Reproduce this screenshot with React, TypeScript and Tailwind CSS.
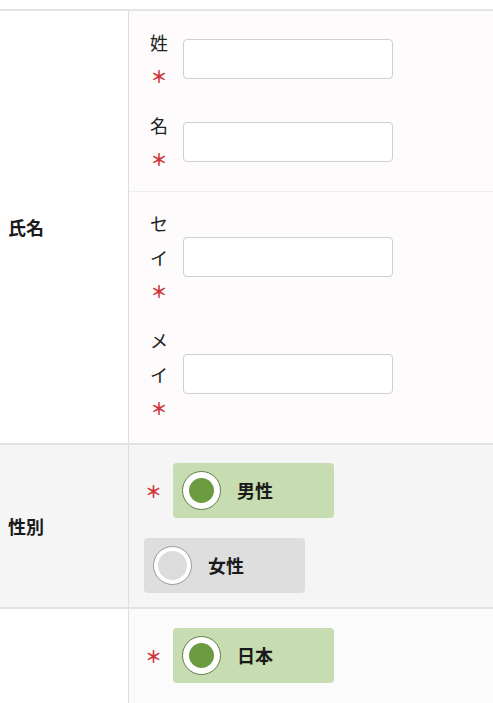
import React from 'react';

const font = { fontFamily: '"Noto Sans CJK JP", "Noto Sans", sans-serif' };

const Req: React.FC = () => (
  <span className="block text-center text-[17px] font-bold text-[#d0343a]">＊</span>
);

interface TextFieldProps {
  label: string[];
}

const TextField: React.FC<TextFieldProps> = ({ label }) => (
  <div className="flex items-center">
    <div className="w-[30px] text-[18px] leading-[34px] text-[#222]">
      {label.map((c, i) => (
        <span key={i} className="block text-center">
          {c}
        </span>
      ))}
      <Req />
    </div>
    <input
      type="text"
      className="ml-[9px] h-[40px] w-[210px] rounded-[4px] border border-[#cfcfcf] bg-white outline-none"
    />
  </div>
);

interface RadioProps {
  label: string;
  checked?: boolean;
}

const Radio: React.FC<RadioProps> = ({ label, checked }) => (
  <div
    className={`flex h-[55px] w-[161px] items-center rounded-[4px] pl-[9px] ${
      checked ? 'bg-[#c7ddb1]' : 'bg-[#dedede]'
    }`}
  >
    <span
      className={`flex h-[39px] w-[39px] items-center justify-center rounded-full border-[1.5px] bg-white ${
        checked ? 'border-[#5f7f45]' : 'border-[#9a9a9a]'
      }`}
    >
      {checked ? (
        <span className="h-[25px] w-[25px] rounded-full bg-[#6c9b42]" />
      ) : (
        <span className="h-[29px] w-[29px] rounded-full bg-[#dcdcdc]" />
      )}
    </span>
    <span className="ml-[16px] text-[18px] font-bold text-[#1a1a1a]">{label}</span>
  </div>
);

const ReqMark: React.FC = () => (
  <span className="w-[29px] pl-[1px] text-[17px] font-bold text-[#d0343a]">＊</span>
);

export default function App() {
  return (
    <div className="w-[493px] bg-white pt-[9px]" style={font}>
      {/* 氏名 */}
      <div className="flex border-t-2 border-[#e4e4e4]">
        <div className="flex w-[128px] items-center pl-[8px] text-[18px] font-bold text-[#1a1a1a]">
          氏名
        </div>
        <div className="flex-1 border-l border-[#dedede] bg-[#fdfbfb]">
          <div className="flex flex-col gap-[15px] border-b border-[#eeeeee] pb-[15px] pl-[15px] pt-[14px]">
            <TextField label={['姓']} />
            <TextField label={['名']} />
          </div>
          <div className="flex flex-col gap-[15px] pb-[18px] pl-[15px] pt-[14px]">
            <TextField label={['セ', 'イ']} />
            <TextField label={['メ', 'イ']} />
          </div>
        </div>
      </div>

      {/* 性別 */}
      <div className="flex border-t-2 border-[#e2e2e2] bg-[#f5f5f5]">
        <div className="flex w-[128px] items-center pl-[8px] text-[18px] font-bold text-[#1a1a1a]">
          性別
        </div>
        <div className="flex flex-1 flex-col gap-[20px] border-l border-[#dedede] pb-[14px] pl-[15px] pt-[18px]">
          <div className="flex items-center">
            <ReqMark />
            <Radio label="男性" checked />
          </div>
          <Radio label="女性" />
        </div>
      </div>

      {/* 国籍 */}
      <div className="flex border-t-2 border-[#e2e2e2]">
        <div className="w-[128px]" />
        <div className="flex min-h-[110px] flex-1 flex-col border-l border-[#dedede] bg-[#fbfbfb] pl-[15px] pt-[19px]">
          <div className="flex items-center">
            <ReqMark />
            <Radio label="日本" checked />
          </div>
        </div>
      </div>
    </div>
  );
}
